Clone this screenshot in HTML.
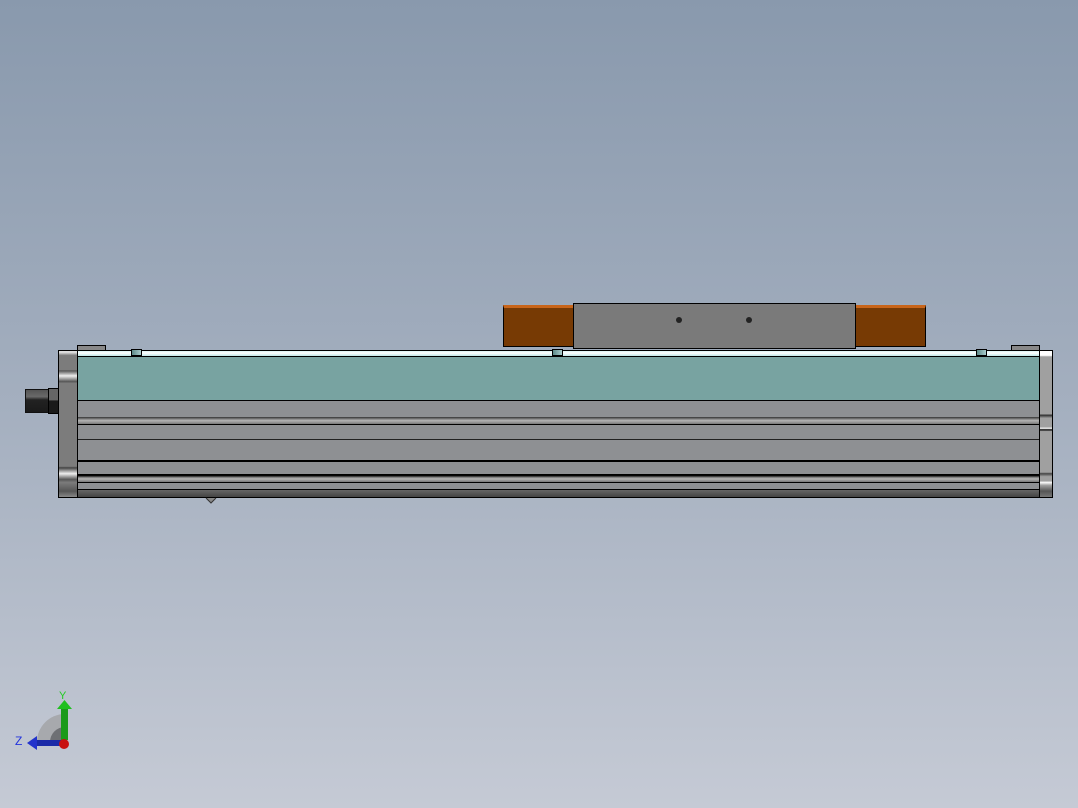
<!DOCTYPE html>
<html><head><style>
body{margin:0;width:1078px;height:808px;overflow:hidden;background:linear-gradient(#8999ad,#a4afbf 50%,#c5cad5);position:relative;font-family:"Liberation Sans",sans-serif}
div{position:absolute;box-sizing:border-box}
.b{border:1px solid #000}
</style></head><body>
<!-- carriage -->
<div class="b" style="left:503px;top:305px;width:71px;height:42px;background:#773a04;border-top:3px solid #c8651a"></div>
<div class="b" style="left:855px;top:305px;width:71px;height:42px;background:#773a04;border-top:3px solid #c8651a"></div>
<div class="b" style="left:573px;top:303px;width:283px;height:46px;background:#7a7a7a"></div>
<div style="left:676px;top:317px;width:6px;height:6px;border-radius:50%;background:#222"></div>
<div style="left:746px;top:317px;width:6px;height:6px;border-radius:50%;background:#222"></div>
<!-- tabs -->
<div class="b" style="left:77px;top:345px;width:29px;height:6px;background:#888"></div>
<div class="b" style="left:1011px;top:345px;width:29px;height:6px;background:#888"></div>
<!-- connector -->
<div style="left:25px;top:389px;width:24px;height:24px;background:linear-gradient(#555,#6a6a6a 30%,#222 45%,#1a1a1a);border:1px solid #111"></div>
<div style="left:48px;top:388px;width:11px;height:26px;background:linear-gradient(#666 45%,#1a1a1a 50%);border:1px solid #000"></div>
<!-- left cap -->
<div class="b" style="left:58px;top:350px;width:20px;height:148px;background:linear-gradient(#ddd 0,#ddd 1%,#7c7c7c 3%,#7c7c7c 13%,#555 13.5%,#eee 17%,#555 21%,#7c7c7c 22%,#7c7c7c 79%,#444 80%,#eee 84%,#555 88%,#7c7c7c 90%,#555 96%,#888)"></div>
<!-- right cap -->
<div class="b" style="left:1039px;top:350px;width:14px;height:148px;background:linear-gradient(#fff 0,#fff 3%,#a0a0a0 4%,#a0a0a0 43%,#333 44%,#a0a0a0 46%,#a0a0a0 52%,#fff 53%,#000 54%,#a0a0a0 55%,#a0a0a0 83%,#444 84%,#a0a0a0 86%,#a0a0a0 89%,#fff 90%,#a0a0a0 92%,#555 96%,#777)"></div>
<!-- body -->
<div class="b" style="left:77px;top:350px;width:963px;height:148px;background:#8e9093;border-bottom:none"></div>
<div style="left:78px;top:351px;width:961px;height:6px;background:linear-gradient(#d8f4f4,#fff 40%,#bfe8e8);border-bottom:1px solid #000"></div>
<div style="left:78px;top:357px;width:961px;height:44px;background:#78a3a1;border-bottom:1px solid #000"></div>
<div style="left:78px;top:417px;width:961px;height:8px;background:linear-gradient(#333,#b5b5b5 50%,#777);border-bottom:1px solid #000"></div>
<div style="left:78px;top:439px;width:961px;height:1px;background:#222"></div>
<div style="left:78px;top:460px;width:961px;height:2px;background:#000"></div>
<div style="left:78px;top:474px;width:961px;height:9px;background:linear-gradient(#000 20%,#777,#b5b5b5 60%,#777);border-bottom:1px solid #000"></div>
<div style="left:78px;top:489px;width:961px;height:9px;background:linear-gradient(#666,#444);border-top:1px solid #000;border-bottom:1px solid #000"></div>
<!-- small blocks -->
<div class="b" style="left:131px;top:349px;width:11px;height:7px;background:linear-gradient(90deg,#5d8a89,#a8cccc)"></div>
<div class="b" style="left:552px;top:349px;width:11px;height:7px;background:linear-gradient(90deg,#5d8a89,#a8cccc)"></div>
<div class="b" style="left:976px;top:349px;width:11px;height:7px;background:linear-gradient(90deg,#5d8a89,#a8cccc)"></div>
<svg style="position:absolute;left:205px;top:497px" width="12" height="8"><path d="M1 1 L6 6 L11 1" fill="#888" stroke="#333"/></svg>
<!-- axis triad -->
<svg style="position:absolute;left:10px;top:685px" width="70" height="70">
<path d="M27 57 A28 28 0 0 1 55 29 L55 57Z" fill="#a7a9ad"/>
<path d="M40 57 A15 15 0 0 1 55 42 L55 57Z" fill="#6e7074"/>
<rect x="51" y="22" width="7" height="33" fill="#1a9a1a"/><path d="M47 24 L54.5 15 L62 24Z" fill="#1fbf1f"/>
<rect x="25" y="55" width="28" height="6" fill="#1a2aa8"/><path d="M27 51 L17 58 L27 65Z" fill="#2233cc"/>
<circle cx="54" cy="59" r="5" fill="#c81010"/>
<text x="49" y="14" font-size="11" fill="#22cc22">Y</text>
<text x="5" y="60" font-size="12" fill="#2233dd">Z</text>
</svg>
</body></html>
